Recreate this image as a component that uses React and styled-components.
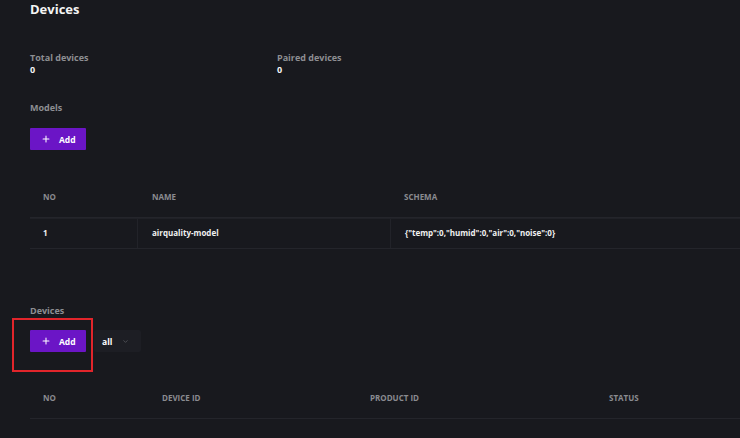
import styled, { createGlobalStyle } from "styled-components";
import { Plus, ChevronDown } from "lucide-react";

const GlobalStyle = createGlobalStyle`
  html, body {
    margin: 0;
    padding: 0;
    background: #18191e;
  }
  * { box-sizing: border-box; }
`;

const Page = styled.div`
  min-height: 438px;
  overflow: hidden;
  padding: 0 0 0 30px;
  background: #18191e;
  font-family: "Open Sans", "Liberation Sans", sans-serif;
  color: #f2f2f2;
`;

const Title = styled.h1`
  margin: 0;
  font-size: 13px;
  line-height: 18px;
  font-weight: 700;
  color: #f4f4f4;
`;

const Stats = styled.div`
  display: grid;
  grid-template-columns: 247px auto;
  margin-top: 34px;
`;

const Label = styled.div`
  font-size: 9px;
  line-height: 12px;
  font-weight: 700;
  color: #8d8e92;
  margin-top: ${({ $top }) => $top || 0}px;
`;

const Value = styled.div`
  font-size: 9px;
  line-height: 12px;
  font-weight: 700;
  color: #f4f4f4;
`;

const Toolbar = styled.div`
  position: relative;
  display: flex;
  align-items: center;
  gap: 8px;
  margin-top: ${({ $top }) => $top}px;
`;

const AddButton = styled.button`
  display: flex;
  align-items: center;
  gap: 8px;
  width: 56px;
  height: 22px;
  padding: 0 0 0 11px;
  border: none;
  border-radius: 1px;
  background: #6b15c6;
  color: #fff;
  font-family: inherit;
  font-size: 8.5px;
  font-weight: 700;
`;

const Select = styled.div`
  display: flex;
  align-items: center;
  justify-content: space-between;
  width: 47px;
  height: 22px;
  padding: 0 12px 0 8px;
  background: #1d1e24;
  border-radius: 2px;
  font-size: 8.5px;
  font-weight: 700;
  color: #fff;
`;

const Highlight = styled.div`
  position: absolute;
  left: -18px;
  top: -12px;
  width: 81px;
  height: 54px;
  border: 2px solid #e1252b;
`;

const Table = styled.div`
  margin-top: ${({ $top }) => $top}px;
  width: 100%;
`;

const HeadRow = styled.div`
  display: grid;
  grid-template-columns: ${({ $cols }) => $cols};
  height: 43px;
  align-items: center;
  border-bottom: 1px solid #24252b;
`;

const BodyRow = styled.div`
  display: grid;
  grid-template-columns: ${({ $cols }) => $cols};
  height: 31px;
  border-top: 1px solid #202127;
  border-bottom: 1px solid #24252b;
`;

const Th = styled.div`
  padding-left: ${({ $pad }) => $pad || 13}px;
  font-size: 8px;
  font-weight: 700;
  color: #8a8b90;
`;

const Td = styled.div`
  display: flex;
  align-items: center;
  padding: 0 0 2px 13px;
  font-size: 8px;
  font-weight: 700;
  color: #f0f0f0;
  & + & {
    border-left: 1px solid #222329;
    padding-left: 14px;
  }
`;

const modelCols = "107px 253px 1fr";
const deviceCols = "119px 208px 239px 1fr";

const models = [
  { no: 1, name: "airquality-model", schema: '{"temp":0,"humid":0,"air":0,"noise":0}' },
];

const App = () => {
  return (
    <>
      <GlobalStyle />
      <Page>
        <Title>Devices</Title>

        <Stats>
          <div>
            <Label>Total devices</Label>
            <Value>0</Value>
          </div>
          <div>
            <Label>Paired devices</Label>
            <Value>0</Value>
          </div>
        </Stats>

        <Label $top={26}>Models</Label>
        <Toolbar $top={14}>
          <AddButton>
            <Plus size={10} strokeWidth={2.5} />
            Add
          </AddButton>
        </Toolbar>

        <Table $top={25}>
          <HeadRow $cols={modelCols}>
            <Th>NO</Th>
            <Th $pad={15}>NAME</Th>
            <Th $pad={14}>SCHEMA</Th>
          </HeadRow>
          {models.map((m) => (
            <BodyRow key={m.no} $cols={modelCols}>
              <Td>{m.no}</Td>
              <Td>{m.name}</Td>
              <Td>{m.schema}</Td>
            </BodyRow>
          ))}
        </Table>

        <Label $top={56}>Devices</Label>
        <Toolbar $top={13}>
          <Highlight />
          <AddButton>
            <Plus size={10} strokeWidth={2.5} />
            Add
          </AddButton>
          <Select>
            all
            <ChevronDown size={7} color="#6b6c72" strokeWidth={2} />
          </Select>
        </Toolbar>

        <Table $top={24}>
          <HeadRow $cols={deviceCols}>
            <Th>NO</Th>
            <Th>DEVICE ID</Th>
            <Th>PRODUCT ID</Th>
            <Th>STATUS</Th>
          </HeadRow>
        </Table>
      </Page>
    </>
  );
};

export default App;
